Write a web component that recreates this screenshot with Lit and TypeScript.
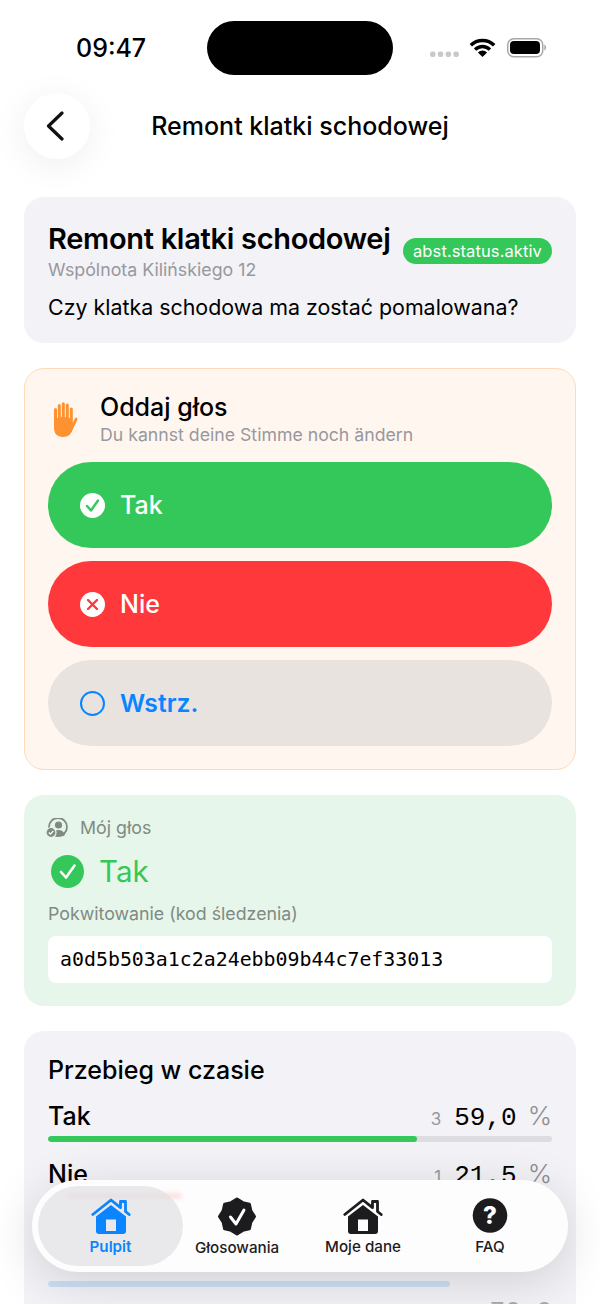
import { LitElement, html, css, svg } from "lit";
import { customElement } from "lit/decorators.js";

const homeIcon = svg`
  <path d="M1.800 16.500 20 2l9.500 7.600V3.500h5v10l3.700 3" fill="none" stroke="currentColor" stroke-width="2.800" stroke-linecap="round" stroke-linejoin="round"/>
  <path fill-rule="evenodd" d="M20 7 35 18.500V33a3 3 0 0 1-3 3H8a3 3 0 0 1-3-3V18.500ZM15 21.500V33h10V21.500Z" fill="currentColor"/>
`;

// scalloped seal, alternating outer and inner points
function sealPoints(cx: number, cy: number, outer: number, inner: number): string {
  const points: string[] = [];
  for (let i = 0; i < 16; i++) {
    const radius = i % 2 === 0 ? outer : inner;
    const angle = (Math.PI / 8) * i - Math.PI / 2;
    points.push(`${(cx + radius * Math.cos(angle)).toFixed(2)},${(cy + radius * Math.sin(angle)).toFixed(2)}`);
  }
  return points.join(" ");
}

@customElement("app-root")
export class AppRoot extends LitElement {
  static styles = css`
    :host {
      display: block;
      position: relative;
      height: 1304px;
      overflow: hidden;
      background: #fff;
      font-family: Inter, "Noto Sans", sans-serif;
      color: #000;
    }
    .status {
      height: 96px;
      display: flex;
      align-items: center;
      padding-left: 76px;
      box-sizing: border-box;
    }
    .time {
      font-size: 25px;
      font-weight: 500;
      line-height: 96px;
      width: 131px;
    }
    .island {
      width: 186px;
      height: 54px;
      border-radius: 27px;
      background: #000;
    }
    .sys {
      margin-left: 37px;
      display: flex;
      align-items: center;
    }
    .nav {
      display: flex;
      align-items: center;
      height: 66px;
      margin: -3px 24px 0;
      position: relative;
    }
    .back {
      width: 66px;
      height: 66px;
      border-radius: 50%;
      background: #fff;
      box-shadow: 0 6px 36px rgba(0, 0, 0, 0.07);
      display: flex;
      align-items: center;
      justify-content: center;
      padding-right: 4px;
      box-sizing: border-box;
    }
    .nav-title {
      position: absolute;
      left: 0;
      right: 0;
      text-align: center;
      font-size: 25px;
      font-weight: 500;
    }
    .content {
      padding: 38px 24px 0;
      display: flex;
      flex-direction: column;
      gap: 25px;
    }
    .card {
      border-radius: 20px;
      background: #f2f2f7;
      box-sizing: border-box;
    }
    .info {
      height: 146px;
      padding: 24px 24px 0;
    }
    .head {
      display: flex;
      justify-content: space-between;
    }
    .title {
      font-size: 29px;
      font-weight: 600;
      letter-spacing: -0.3px;
      line-height: 36px;
      white-space: nowrap;
    }
    .badge {
      height: 26px;
      margin-top: 17px;
      padding: 0 10px;
      border-radius: 13px;
      background: #34c85a;
      color: #fff;
      font-size: 16.500px;
      letter-spacing: 0.1px;
      line-height: 26px;
    }
    .org {
      font-size: 17.800px;
      line-height: 20px;
      color: #98989d;
      margin-top: -4px;
    }
    .question {
      font-size: 21.400px;
      line-height: 26px;
      margin-top: 14px;
    }
    .vote {
      background: #fff6ef;
      border: 1px solid #fddbb8;
      height: 402px;
      padding: 23px 23px 0;
    }
    .vote-head {
      display: flex;
      align-items: flex-start;
      gap: 19px;
      height: 70px;
    }
    .vote-head svg {
      margin-top: 10px;
      margin-left: 5px;
    }
    .vote-title {
      font-size: 25px;
      font-weight: 500;
      line-height: 30px;
    }
    .vote-sub {
      font-size: 17.700px;
      line-height: 22px;
      color: #98989d;
      margin-top: 2px;
    }
    .options {
      display: flex;
      flex-direction: column;
      gap: 13px;
    }
    .option {
      height: 86px;
      border-radius: 43px;
      display: flex;
      align-items: center;
      gap: 15px;
      padding-left: 32px;
      font-size: 25px;
      font-weight: 500;
      color: #fff;
    }
    .yes {
      background: #34c85a;
    }
    .no {
      background: #ff383c;
    }
    .abstain {
      background: #e8e3df;
      color: #0a84ff;
      font-weight: 600;
      font-size: 24.700px;
    }
    .mine {
      background: #e6f6ea;
      height: 211px;
      padding: 22px 24px 0;
    }
    .mine-label {
      display: flex;
      align-items: center;
      gap: 12px;
      font-size: 17.800px;
      line-height: 22px;
      color: #808a83;
      margin-left: -2px;
    }
    .mine-choice {
      display: flex;
      align-items: center;
      gap: 15px;
      font-size: 29.500px;
      line-height: 40px;
      color: #34c85a;
      margin: 12px 0 0 3px;
      height: 40px;
    }
    .receipt-label {
      font-size: 17.800px;
      line-height: 22px;
      color: #808a83;
      margin-top: 12px;
    }
    .receipt {
      margin-top: 11px;
      height: 47px;
      border-radius: 8px;
      background: #fff;
      padding-left: 12px;
      display: flex;
      align-items: center;
      font-family: "DejaVu Sans Mono", monospace;
      font-size: 19.900px;
    }
    .timeline {
      height: 320px;
      padding: 24px 24px 0;
    }
    .timeline-title {
      font-size: 25px;
      font-weight: 500;
      line-height: 30px;
    }
    .rows {
      display: flex;
      flex-direction: column;
      margin-top: 13px;
    }
    .row {
      height: 57.500px;
    }
    .row.tall {
      display: flex;
      align-items: flex-end;
      height: 81px;
      padding-bottom: 7px;
      box-sizing: border-box;
    }
    .row.tall .track {
      flex: 1;
    }
    .row-top {
      display: flex;
      align-items: baseline;
      justify-content: space-between;
      height: 38px;
      line-height: 36px;
    }
    .row-name {
      font-size: 25px;
      font-weight: 500;
    }
    .row-values {
      display: flex;
      align-items: baseline;
      font-family: "Liberation Mono", monospace;
      font-size: 26px;
    }
    .count {
      font-family: Inter, sans-serif;
      font-size: 17px;
      color: #98989d;
      margin-right: 13px;
    }
    .pct {
      font-family: Inter, sans-serif;
      font-weight: 300;
      color: #8e8e93;
      margin-left: 11px;
    }
    .dim .row-values {
      color: #a8a8ac;
    }
    .track {
      height: 6px;
      border-radius: 3px;
      background: #dcdce1;
      overflow: hidden;
    }
    .track.pale {
      background: #f3f3f5;
    }
    .fill {
      height: 100%;
      border-radius: 3px;
    }
    .tabbar {
      position: absolute;
      left: 32px;
      top: 1180px;
      width: 536px;
      height: 92px;
      box-sizing: border-box;
      border-radius: 46px;
      background: #fdfdfe;
      box-shadow: 0 10px 50px rgba(0, 0, 0, 0.14);
      padding: 6px;
      display: grid;
      grid-template-columns: 145px 108px 144px 110px;
      align-items: center;
    }
    .streak {
      position: absolute;
      left: 36px;
      top: 13px;
      width: 114px;
      height: 6px;
      border-radius: 3px;
      background: rgba(255, 70, 70, 0.16);
      filter: blur(2px);
    }
    .tab {
      position: relative;
      height: 80px;
      border-radius: 40px;
      display: flex;
      flex-direction: column;
      align-items: center;
      font-size: 15.200px;
      line-height: 18px;
      font-weight: 500;
      color: #1c1c1e;
      padding-top: 12px;
      box-sizing: border-box;
      white-space: nowrap;
    }
    .tab svg {
      display: block;
      margin-bottom: 4px;
    }
    .tab svg.seal {
      margin: -1px 0 3px;
    }
    .tab.active {
      background: rgba(225, 225, 227, 0.72);
      color: #0a84ff;
      font-weight: 600;
    }
  `;

  render() {
    return html`
      <div class="status">
        <div class="time">09:47</div>
        <div class="island"></div>
        <div class="sys">
          <svg width="118" height="24" viewBox="0 0 118 24">
            <g fill="#c9c9c9">
              <rect x="0" y="15.500" width="5.500" height="5.500" rx="2.200" />
              <rect x="7.800" y="15.500" width="5.500" height="5.500" rx="2.200" />
              <rect x="15.600" y="15.500" width="5.500" height="5.500" rx="2.200" />
              <rect x="23.400" y="15.500" width="5.500" height="5.500" rx="2.200" />
            </g>
            <path
              d="M40.800 9.300a16.500 16.500 0 0 1 23.400 0M45.100 13.600a10.500 10.500 0 0 1 14.800 0"
              fill="none"
              stroke="#000"
              stroke-width="3.400"
            />
            <path d="M52.500 21 47.900 16.400a6.500 6.500 0 0 1 9.200 0Z" fill="#000" />
            <rect x="77.750" y="2.750" width="35" height="18" rx="6" fill="none" stroke="#a8a8a8" stroke-width="1.500" />
            <rect x="80" y="5" width="30" height="13" rx="4" fill="#000" />
            <path d="M114.300 8.500c1.200.4 1.800 1.700 1.800 3s-.6 2.600-1.800 3Z" fill="#a8a8a8" />
          </svg>
        </div>
      </div>
      <div class="nav">
        <div class="back">
          <svg width="18" height="30" viewBox="0 0 18 30">
            <path
              d="M16 2 2.500 15 16 28"
              fill="none"
              stroke="#111"
              stroke-width="3.200"
              stroke-linecap="round"
              stroke-linejoin="round"
            />
          </svg>
        </div>
        <div class="nav-title">Remont klatki schodowej</div>
      </div>
      <div class="content">
        <div class="card info">
          <div class="head">
            <div class="title">Remont klatki schodowej</div>
            <div class="badge">abst.status.aktiv</div>
          </div>
          <div class="org">Wspólnota Kilińskiego 12</div>
          <div class="question">Czy klatka schodowa ma zostać pomalowana?</div>
        </div>
        <div class="card vote">
          <div class="vote-head">
            <svg width="28" height="36" viewBox="4 0 28 36">
              <path
                d="M8.800 3.500a1.500 1.500 0 0 1 3 0V15h1V1.800a1.500 1.500 0 0 1 3 0V15h1V3a1.500 1.500 0 0 1 3 0v13h1V7a1.500 1.500 0 0 1 3 0v14l1.500-3.500c.7-1.500 1.700-2.300 2.500-1.900.8.400.7 1.500.2 2.800L24 27c-1.700 5-4.600 8-10 8-6 0-9-3.500-9-9.500V7.500a1.500 1.500 0 0 1 3 0V16h.8Z"
                fill="#ff9230"
              />
            </svg>
            <div>
              <div class="vote-title">Oddaj głos</div>
              <div class="vote-sub">Du kannst deine Stimme noch ändern</div>
            </div>
          </div>
          <div class="options">
            <div class="option yes">
              <svg width="25" height="25" viewBox="0 0 25 25">
                <circle cx="12.500" cy="12.500" r="12.500" fill="#fff" />
                <path
                  d="m7 13 4 4.500 7-10"
                  fill="none"
                  stroke="#34c85a"
                  stroke-width="2.400"
                  stroke-linecap="round"
                  stroke-linejoin="round"
                />
              </svg>
              Tak
            </div>
            <div class="option no">
              <svg width="25" height="25" viewBox="0 0 25 25">
                <circle cx="12.500" cy="12.500" r="12.500" fill="#fff" />
                <path
                  d="m8 8 9 9m0-9-9 9"
                  fill="none"
                  stroke="#ff383c"
                  stroke-width="2.400"
                  stroke-linecap="round"
                />
              </svg>
              Nie
            </div>
            <div class="option abstain">
              <svg width="25" height="25" viewBox="0 0 25 25">
                <circle cx="12.500" cy="12.500" r="11.500" fill="none" stroke="#0a84ff" stroke-width="2" />
              </svg>
              Wstrz.
            </div>
          </div>
        </div>
        <div class="card mine">
          <div class="mine-label">
            <svg width="22" height="20" viewBox="0 0 22 20">
              <circle cx="12" cy="9" r="9" fill="none" stroke="#808a83" stroke-width="1.800" />
              <circle cx="12.500" cy="7" r="3.600" fill="#808a83" />
              <path d="M6 17c1-3.500 3.500-5 6.500-5s5.500 1.500 6.500 5c-2 2-11 2-13 0Z" fill="#808a83" />
              <circle cx="5" cy="14.500" r="5" fill="#808a83" stroke="#e6f6ea" stroke-width="1.200" />
              <path d="m2.800 14.500 1.700 1.700 2.800-3.200" fill="none" stroke="#fff" stroke-width="1.200" />
            </svg>
            Mój głos
          </div>
          <div class="mine-choice">
            <svg width="33" height="33" viewBox="0 0 33 33">
              <circle cx="16.500" cy="16.500" r="16.500" fill="#34c85a" />
              <path
                d="m10 17 5 5.500 8.500-12"
                fill="none"
                stroke="#fff"
                stroke-width="2.600"
                stroke-linecap="round"
                stroke-linejoin="round"
              />
            </svg>
            Tak
          </div>
          <div class="receipt-label">Pokwitowanie (kod śledzenia)</div>
          <div class="receipt">a0d5b503a1c2a24ebb09b44c7ef33013</div>
        </div>
        <div class="card timeline">
          <div class="timeline-title">Przebieg w czasie</div>
          <div class="rows">
            ${this.row("Tak", "3", "59,0", 73.2, "#34c85a")}
            ${this.row("Nie", "1", "21,5", 21.5, "#ff383c")}
            <div class="row tall">
              <div class="track pale"><div class="fill" style="width:79.8%;background:#cbe0f6"></div></div>
            </div>
            <div class="row dim">
              <div class="row-top">
                <span></span>
                <span class="row-values">70,0</span>
              </div>
            </div>
          </div>
        </div>
      </div>
      <div class="tabbar">
        <div class="streak"></div>
        <div class="tab active">
          <svg width="40" height="36" viewBox="0 0 40 36">${homeIcon}</svg>
          Pulpit
        </div>
        <div class="tab">
          <svg class="seal" width="40" height="39" viewBox="0 0 40 39">
            <polygon
              points=${sealPoints(20, 19.5, 17.5, 15)}
              fill="#1c1c1e"
              stroke="#1c1c1e"
              stroke-width="3"
              stroke-linejoin="round"
            />
            <path
              d="m13.500 20 5.500 7 8-14"
              fill="none"
              stroke="#fff"
              stroke-width="3"
              stroke-linecap="round"
              stroke-linejoin="round"
            />
          </svg>
          Głosowania
        </div>
        <div class="tab">
          <svg width="40" height="36" viewBox="0 0 40 36">${homeIcon}</svg>
          Moje dane
        </div>
        <div class="tab">
          <svg width="36" height="36" viewBox="0 0 36 36">
            <circle cx="18" cy="17.500" r="17.300" fill="#1c1c1e" />
            <text
              x="18"
              y="26"
              text-anchor="middle"
              font-family="Inter, sans-serif"
              font-size="24"
              font-weight="800"
              fill="#fff"
            >?</text>
          </svg>
          FAQ
        </div>
      </div>
    `;
  }

  private row(name: string, count: string, value: string, width: number, color: string) {
    return html`
      <div class="row">
        <div class="row-top">
          <span class="row-name">${name}</span>
          <span class="row-values">
            <span class="count">${count}</span>${value}<span class="pct">%</span>
          </span>
        </div>
        <div class="track"><div class="fill" style="width:${width}%;background:${color}"></div></div>
      </div>
    `;
  }
}
